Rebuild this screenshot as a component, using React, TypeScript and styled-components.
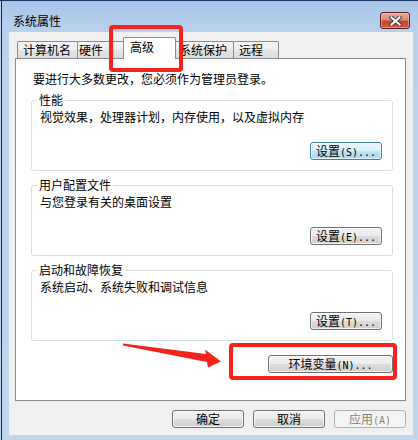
import React from 'react';
import styled, { createGlobalStyle, css } from 'styled-components';

const GlobalStyle = createGlobalStyle`
  html, body { margin: 0; padding: 0; background: #bcd4ec; }
  body {
    font-family: 'Noto Sans CJK SC', 'Noto Sans', sans-serif;
    font-size: 12px;
    color: #000;
  }
  * { box-sizing: border-box; }
`;

const Frame = styled.div`
  position: relative;
  width: 418px;
  height: 440px;
  display: flex;
  flex-direction: column;
  border-top: 1px solid #1c3966;
  background: linear-gradient(180deg, #a8c5e7 0px, #b9d1ed 30px, #bed5ee 100%);
  box-shadow: inset 1px 0 0 #c2d8ef, inset 2px 0 0 #10213a;
  overflow: hidden;
`;

const TitleBar = styled.div`
  height: 31px;
  display: flex;
  align-items: flex-start;
  justify-content: space-between;
  padding: 11px 8px 0 13px;
`;

const Title = styled.div`
  margin-top: 2px;
  line-height: 14px;
  color: #000;
`;

const CloseButton = styled.div`
  width: 30px;
  height: 17px;
  border: 1px solid #5b1d1d;
  border-radius: 3px;
  background: linear-gradient(180deg, #e6aa9d 0%, #d98b7b 45%, #c3462f 55%, #cd5d43 100%);
  box-shadow: inset 0 0 0 1px rgba(255, 220, 210, 0.45);
  display: flex;
  align-items: center;
  justify-content: center;
`;

const Client = styled.div`
  flex: 1;
  margin: 0 5px 5px 9px;
  background: #f0f0f0;
  padding: 5px 7px 0 6px;
  display: flex;
  flex-direction: column;
`;

const TabStrip = styled.div`
  display: flex;
  align-items: flex-end;
  height: 21px;
  padding-left: 2px;
`;

const Tab = styled.div<{ $active?: boolean; $w: number; $pad?: number }>`
  width: ${(p) => p.$w}px;
  height: 17px;
  padding: 1px 0 0 ${(p) => p.$pad ?? 5}px;
  line-height: 14px;
  white-space: nowrap;
  border: 1px solid #898c95;
  border-bottom: none;
  border-radius: 2px 2px 0 0;
  margin-right: -1px;
  background: linear-gradient(180deg, #f6f6f6 0%, #eeeeee 45%, #e3e3e3 55%, #dcdcdc 100%);
  ${(p) =>
    p.$active &&
    css`
      height: 22px;
      padding-top: 2px;
      margin: 0 -2px -1px -2px;
      background: #fff;
      position: relative;
      z-index: 1;
    `}
`;

const Panel = styled.div`
  border: 1px solid #898c95;
  background: #fff;
  padding: 13px 12px 27px 15px;
  display: flex;
  flex-direction: column;
`;

const Intro = styled.div`
  line-height: 14px;
  padding-left: 2px;
`;

const Group = styled.fieldset`
  margin: 7px 0 0 0;
  min-width: 0;
  border: 1px solid #d5dfe5;
  border-radius: 3px;
  padding: 3px 10px 10px 8px;
`;

const Legend = styled.legend`
  line-height: 14px;
  padding: 0 2px;
  margin-left: -3px;
`;

const Desc = styled.div`
  line-height: 14px;
`;

const ButtonRow = styled.div<{ $gap?: number; $top: number }>`
  display: flex;
  justify-content: flex-end;
  gap: ${(p) => p.$gap ?? 0}px;
  margin-top: ${(p) => p.$top}px;
`;

type Variant = 'normal' | 'focused' | 'disabled';

const Button = styled.button<{ $variant?: Variant; $w?: number }>`
  width: ${(p) => p.$w ?? 72}px;
  height: 18px;
  padding: 0;
  font: inherit;
  line-height: 16px;
  white-space: nowrap;
  color: #000;
  border: 1px solid #707070;
  border-radius: 3px;
  background: linear-gradient(180deg, #f2f2f2 0%, #ebebeb 50%, #dddddd 50%, #cfcfcf 100%);
  box-shadow: inset 0 0 0 1px rgba(255, 255, 255, 0.7);
  ${(p) =>
    p.$variant === 'focused' &&
    css`
      border-color: #3c7fb1;
      background: linear-gradient(180deg, #eaf6fd 0%, #d9f0fc 50%, #bee6fd 50%, #a7d9f5 100%);
    `}
  ${(p) =>
    p.$variant === 'disabled' &&
    css`
      border-color: #adb2b5;
      background: #f4f4f4;
      color: #838383;
      box-shadow: none;
    `}
`;

const Mono = styled.span`
  font-family: 'DejaVu Sans Mono', 'Liberation Mono', monospace;
  font-size: 10px;
`;

const Highlight = styled.div<{ $x: number; $y: number; $w: number; $h: number }>`
  position: absolute;
  left: ${(p) => p.$x}px;
  top: ${(p) => p.$y}px;
  width: ${(p) => p.$w}px;
  height: ${(p) => p.$h}px;
  border: 4px solid #f5231b;
  border-radius: 4px;
  pointer-events: none;
  z-index: 5;
`;

const ArrowSvg = styled.svg`
  position: absolute;
  left: 118px;
  top: 339px;
  z-index: 5;
  pointer-events: none;
`;

const CloseIcon = () => (
  <svg width="13" height="10" viewBox="0 0 13 10">
    <path d="M2.5 1.5 L10.5 8.5 M10.5 1.5 L2.5 8.5" stroke="#3b3b3b" strokeWidth="4" strokeLinecap="square" fill="none" />
    <path d="M2.5 1.5 L10.5 8.5 M10.5 1.5 L2.5 8.5" stroke="#ffffff" strokeWidth="2.2" strokeLinecap="square" fill="none" />
  </svg>
);

const groups = [
  { legend: '性能', desc: '视觉效果，处理器计划，内存使用，以及虚拟内存', key: 'S', variant: 'focused' as Variant },
  { legend: '用户配置文件', desc: '与您登录有关的桌面设置', key: 'E', variant: 'normal' as Variant },
  { legend: '启动和故障恢复', desc: '系统启动、系统失败和调试信息', key: 'T', variant: 'normal' as Variant },
];

export default function App() {
  return (
    <>
      <GlobalStyle />
      <Frame>
        <TitleBar>
          <Title>系统属性</Title>
          <CloseButton>
            <CloseIcon />
          </CloseButton>
        </TitleBar>
        <Client>
          <TabStrip>
            <Tab $w={61}>计算机名</Tab>
            <Tab $w={49} $pad={1}>硬件</Tab>
            <Tab $w={53} $pad={6} $active>高级</Tab>
            <Tab $w={60} $pad={4}>系统保护</Tab>
            <Tab $w={46} $pad={5}>远程</Tab>
          </TabStrip>
          <Panel>
            <Intro>要进行大多数更改，您必须作为管理员登录。</Intro>
            {groups.map((g) => (
              <Group key={g.legend}>
                <Legend>{g.legend}</Legend>
                <Desc>{g.desc}</Desc>
                <ButtonRow $top={18}>
                  <Button $variant={g.variant}>
                    设置<Mono>({g.key})...</Mono>
                  </Button>
                </ButtonRow>
              </Group>
            ))}
            <ButtonRow $top={14}>
              <Button $w={125}>
                环境变量<Mono>(N)...</Mono>
              </Button>
            </ButtonRow>
          </Panel>
          <ButtonRow $top={9} $gap={9}>
            <Button>确定</Button>
            <Button>取消</Button>
            <Button $variant="disabled">
              应用<Mono>(A)</Mono>
            </Button>
          </ButtonRow>
        </Client>
        <Highlight $x={109} $y={24} $w={74} $h={47} />
        <Highlight $x={229} $y={342} $w={168} $h={37} />
        <ArrowSvg width="108" height="32" viewBox="118 340 108 32">
          <polygon
            points="123,343.5 206,354 205,349.5 221,361.5 208,367.5 207,362 123,345.5"
            fill="#f5231b"
          />
        </ArrowSvg>
      </Frame>
    </>
  );
}
